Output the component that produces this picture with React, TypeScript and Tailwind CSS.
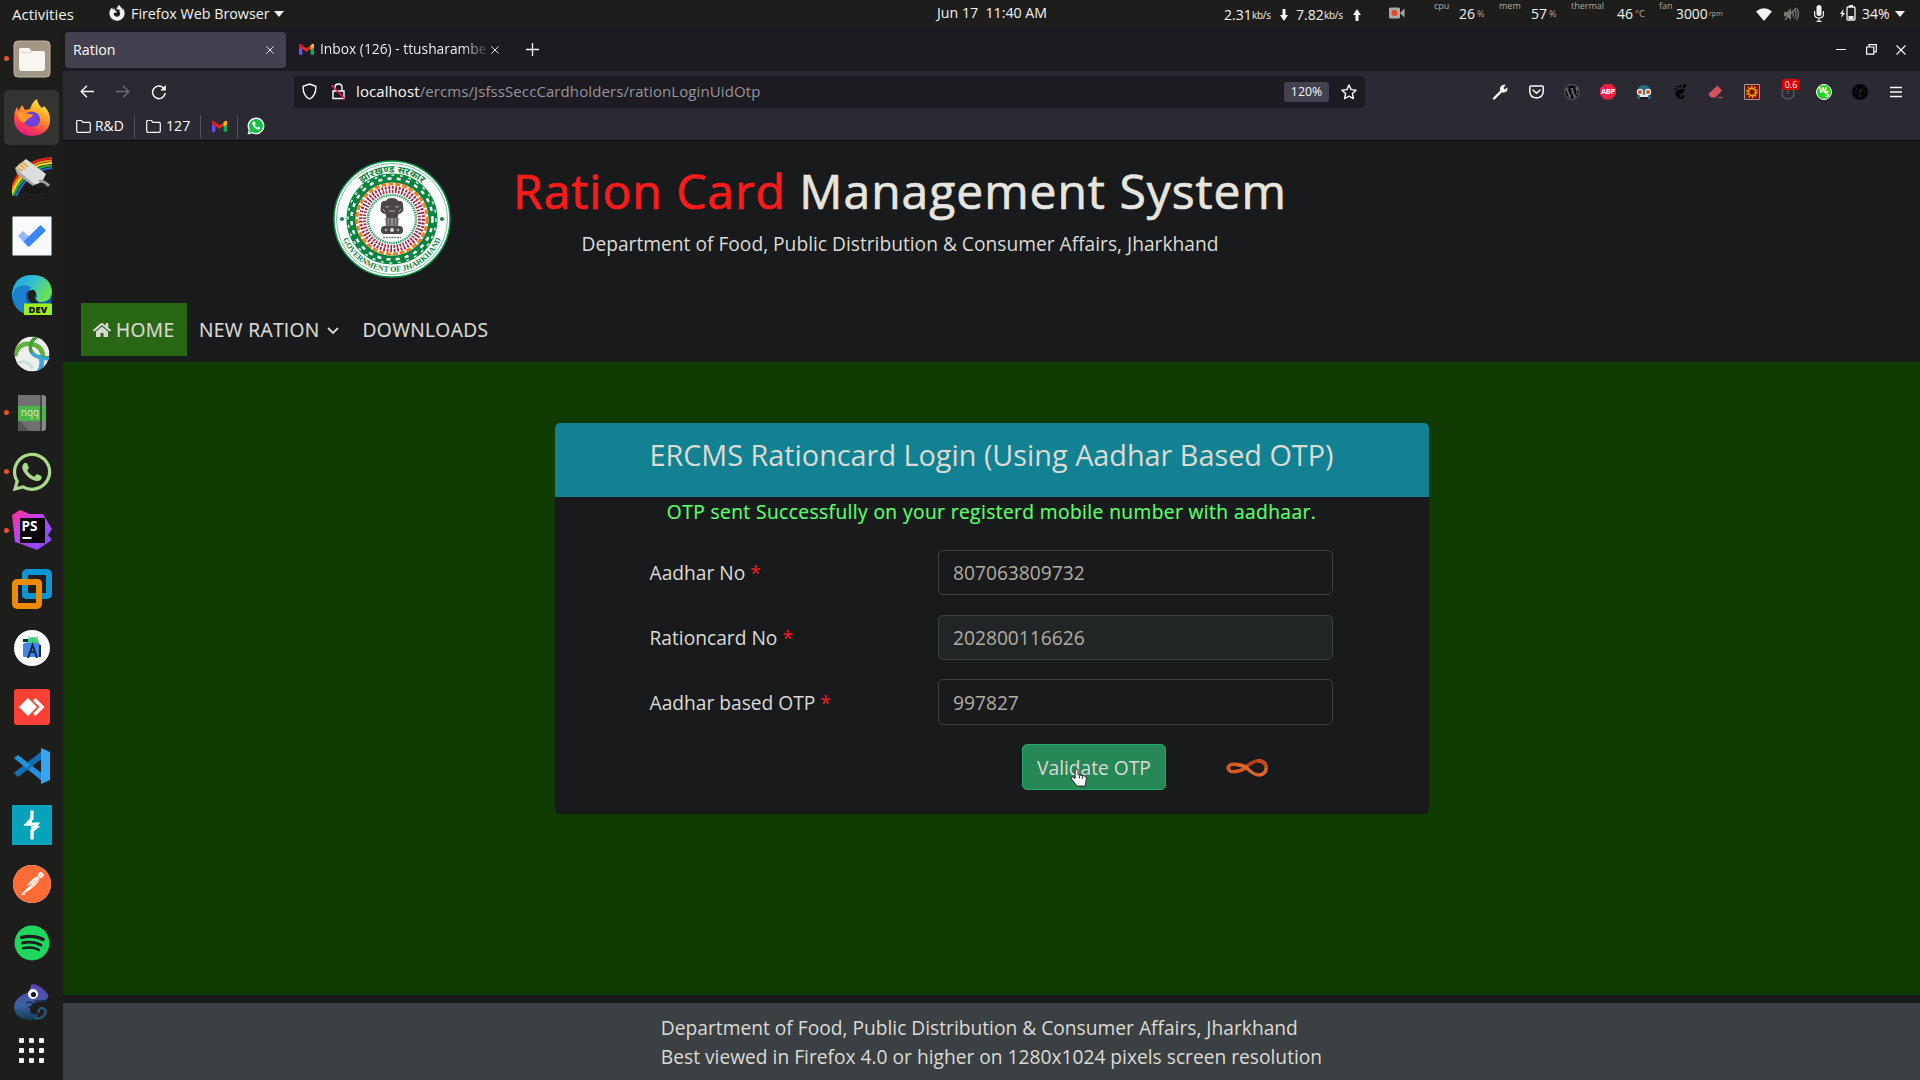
import React from "react";
import { FaWhatsapp, FaSpotify, FaWordpress, FaFirefoxBrowser, FaHome } from "react-icons/fa";
import { SiPostman, SiGnome } from "react-icons/si";

function Caret() {
  return (
    <svg width="10" height="6" viewBox="0 0 10 6">
      <path d="M0 0h10L5 6z" fill="#f2f2f0" />
    </svg>
  );
}

function Gmail({ size }: { size: number }) {
  return (
    <svg width={size} height={size} viewBox="0 0 16 16">
      <path d="M0 3v10.5h3.6V6z" fill="#6a4ff5" />
      <path d="M16 3v10.5h-3.6V6z" fill="#0fae55" />
      <path d="M0 3.4Q.2 1.8 1.8 2L8 7l6.2-5Q16 1.8 16 3.5v2.3l-3.6 2V6.9L8 10.6 3.6 7v1L0 5.6z" fill="#f0261c" />
      <path d="M12.4 3.5L14.2 2Q16 1.8 16 3.5v2.4l-3.6 2.4z" fill="#fbc107" />
      <path d="M0 3.4Q.2 1.8 1.8 2l1.800 1.500v4.700L0 5.800z" fill="#d11a3c" />
    </svg>
  );
}

function WhatsappBadge() {
  return (
    <svg width="18" height="18" viewBox="0 0 18 18">
      <path d="M.5 17.5l1.200-4.400A8.400 8.400 0 1 1 5 16.300z" fill="#fff" />
      <path d="M2 16l1-3.300A7 7 0 1 1 5.300 15z" fill="#12c143" />
      <path d="M6.200 4.600c-1.500 1-1 3.200.9 5.400 2 2.300 4.500 3.400 5.800 2 .8-.9.400-1.400-.3-1.800-1.200-.7-1.400-.6-2 .3-.8.200-2.600-1.500-2.700-2.400.9-.8.800-1 .4-2-.5-1.500-1.200-2.100-2.100-1.500z" fill="#fff" />
    </svg>
  );
}

function Folder() {
  return (
    <svg width="15" height="15" viewBox="0 0 15 15" fill="none" stroke="#fbfbfe" strokeWidth="1.2">
      <path d="M.7 12V2.600Q.7 1.500 1.800 1.500h3.700l1.500 1.800h6.200q1.100 0 1.100 1.100V12q0 1.300-1.200 1.300H1.900Q.7 13.300.7 12z" />
    </svg>
  );
}

function TopBar() {
  return (
    <div className="flex h-[28px] w-full shrink-0 items-center bg-[#1d1d1b] text-[14.3px] leading-[20px] text-[#f2f2f0]">
      <span className="ml-[12px] w-[97px] pb-[1px] text-[15px]">Activities</span>
      <span className="w-[22px] pb-[3px]"><FaFirefoxBrowser size={16} color="#f2f2f0" /></span>
      <span className="mr-[4px] w-[139px] pb-[1px]">Firefox Web Browser</span>
      <Caret />
      <span className="ml-[653px] w-[287px] pb-[2px] text-[14.2px] whitespace-pre">Jun 17  11:40 AM</span>
      <div className="flex h-[28px] items-center">
        <span className="w-[28px] pt-[1px] text-[14px]">2.31</span>
        <span className="w-[28px] pt-[1px] text-[10px] tracking-[-0.3px]">kb/s</span>
        <svg className="mt-[1px]" width="8" height="12" viewBox="0 0 8 12"><path d="M2.500 0h3v6H8l-4 6-4-6h2.500z" fill="#f2f2f0" /></svg>
        <span className="ml-[8px] w-[28px] pt-[1px] text-[14px]">7.82</span>
        <span className="w-[29px] pt-[1px] text-[10px] tracking-[-0.3px]">kb/s</span>
        <svg className="mt-[1px]" width="8" height="12" viewBox="0 0 8 12"><path d="M2.500 12h3V6H8L4 0 0 6h2.500z" fill="#f2f2f0" /></svg>
        <svg className="mb-[2px] ml-[28px]" width="16" height="12" viewBox="0 0 16 12">
          <rect width="11" height="11" y=".5" rx="1.5" fill="#a9a9a5" />
          <path d="M11 6l4.500-4.500v9z" fill="#a9a9a5" />
          <circle cx="5.500" cy="6" r="3" fill="#e8442b" />
        </svg>
        <span className="ml-[29px] h-[28px] w-[25px] text-[9px] leading-[12px] text-[#a9a9a5]">cpu</span>
        <span className="w-[18px] text-[14px]">26</span>
        <span className="w-[22px] text-[9px] text-[#a9a9a5]">%</span>
        <span className="h-[28px] w-[32px] text-[9px] leading-[12px] text-[#a9a9a5]">mem</span>
        <span className="w-[18px] text-[14px]">57</span>
        <span className="w-[22px] text-[9px] text-[#a9a9a5]">%</span>
        <span className="h-[28px] w-[46px] text-[9px] leading-[12px] text-[#a9a9a5]">thermal</span>
        <span className="w-[18px] text-[14px]">46</span>
        <span className="w-[24px] text-[9.5px] text-[#a9a9a5]">°C</span>
        <span className="h-[28px] w-[17px] text-[9px] leading-[12px] text-[#a9a9a5]">fan</span>
        <span className="w-[33px] text-[13.8px]">3000</span>
        <span className="w-[47px] text-[7px] text-[#a9a9a5]">rpm</span>
      </div>
      <svg width="16" height="13" viewBox="0 0 16 13"><path d="M0 3.500Q8-3.200 16 3.500L8 13z" fill="#f2f2f0" /></svg>
      <svg className="ml-[12px]" width="16" height="14" viewBox="0 0 16 14" fill="none" stroke="#777773" strokeWidth="1.300">
        <path d="M0 5h3l4-4v12L3 9.500H0z" fill="#777773" stroke="none" />
        <path d="M8.500 5q1.500 2 0 4.500M10.500 3q3 4 0 8.500M12.500 1.500q4 5.500 0 11.500" /><path d="M1 13L12 1" />
      </svg>
      <svg className="mb-[2px] ml-[14px]" width="10" height="17" viewBox="0 0 10 17"><rect x="2.500" width="5" height="11" rx="2.500" fill="#f2f2f0" /><path d="M.6 6v3q0 4 4.400 4t4.400-4V6M5 13v3M2.500 16.400h5" fill="none" stroke="#f2f2f0" strokeWidth="1.200" /></svg>
      <svg className="mb-[2px] ml-[16px]" width="16" height="16" viewBox="0 0 16 16"><path d="M3.500 4L0 9h2L1.200 13 5 8H3z" fill="#f2f2f0" /><rect x="7" y="2" width="8" height="13" rx="1" fill="none" stroke="#f2f2f0" strokeWidth="1.300" /><path d="M9 0h4v2H9zM8.500 11h5v3h-5z" fill="#f2f2f0" /></svg>
      <span className="ml-[6px] w-[33px] text-[14px]">34%</span>
      <Caret />
    </div>
  );
}

function Cross({ size, className }: { size: number; className?: string }) {
  return (
    <svg className={className} width={size} height={size} viewBox="0 0 10 10" stroke="#fbfbfe" strokeWidth="1.100">
      <path d="M.5.500l9 9M9.500.500l-9 9" />
    </svg>
  );
}

function TabStrip() {
  return (
    <div className="flex h-[43px] shrink-0 items-center bg-[#1c1b22] text-[14.2px] text-[#fbfbfe]">
      <div className="ml-[2px] flex h-[36px] w-[221px] items-center rounded-[4px] bg-[#42414d] pl-[8px]">
        <span className="w-[193px]">Ration</span>
        <Cross size={8} />
      </div>
      <div className="ml-[13px] flex items-center">
        <Gmail size={15} />
        <span className="ml-[6px] w-[167px] overflow-hidden bg-gradient-to-r from-[#fbfbfe] from-85% to-[#fbfbfe20] bg-clip-text text-[13.8px] whitespace-nowrap text-transparent">Inbox (126) - ttusharambe</span>
        <Cross size={8} className="ml-[4px]" />
      </div>
      <svg className="ml-[27px]" width="13" height="13" viewBox="0 0 13 13" stroke="#fbfbfe" strokeWidth="1.300"><path d="M6.500 0v13M0 6.500h13" /></svg>
      <svg className="ml-auto" width="10" height="10" viewBox="0 0 10 10" stroke="#fbfbfe"><path d="M0 4.500h10" /></svg>
      <svg className="ml-[20px]" width="11" height="11" viewBox="0 0 11 11" fill="none" stroke="#fbfbfe" strokeWidth="1.200"><path d="M.6 3h7.200v7.200H.6zM3 3V.6h7.300v7.300H8" /></svg>
      <Cross size={10} className="mr-[14px] ml-[19px]" />
    </div>
  );
}

const extensionIcons = [
  <svg key="wrench" width="16" height="16" viewBox="0 0 16 16"><path d="M2 14.500L10 6.500" stroke="#fbfbfe" strokeWidth="2.400" strokeLinecap="round" /><path d="M8 6Q7.500 1 12.500.5l1 .5-2 3L13 5.500l2.200-2.300q1.300 5.800-4.700 5.300z" fill="#fbfbfe" /></svg>,
  <svg key="pocket" width="15" height="14" viewBox="0 0 15 14" fill="none" stroke="#fbfbfe" strokeWidth="1.500"><path d="M.8 2Q.8 1 1.800 1h11.400q1 0 1 1v4q0 6.500-6.700 7Q.8 12.500.8 6zM4 5l3.500 3.300L11 5" strokeLinecap="round" /></svg>,
  <FaWordpress key="wp" size={16} color="#060607" className="rounded-full bg-[#66666a]" />,
  <div key="abp" className="flex h-4 w-4 items-center justify-center bg-[#ed1e45] text-[7.500px] font-bold tracking-[-0.3px] text-white [clip-path:polygon(30%_0,70%_0,100%_30%,100%_70%,70%_100%,30%_100%,0_70%,0_30%)]">ABP</div>,
  <svg key="goggles" width="16" height="16" viewBox="0 0 16 16"><path d="M1.500 9Q1 1 8 1t6.500 8v6H12v-3H4v3H1.500z" fill="#276c83" /><path d="M4 10.500h8v2.500H4z" fill="#e9e4dc" /><path d="M4 14.500h8" stroke="#111" strokeWidth="1.500" strokeDasharray="2 1" /><circle cx="4" cy="8" r="2.600" fill="#e54c23" stroke="#efebe2" strokeWidth="1.300" /><circle cx="12" cy="8" r="2.600" fill="#e54c23" stroke="#efebe2" strokeWidth="1.300" /></svg>,
  <SiGnome key="gnome" size={15} color="#050506" />,
  <svg key="eraser" width="16" height="14" viewBox="0 0 16 14"><path d="M9.500 1l4 4.500-6 6.500H3L.8 9z" fill="#d3525a" stroke="#d3525a" strokeLinejoin="round" /><path d="M10.500 12.500h4" stroke="#d3525a" strokeWidth="1.200" /></svg>,
  <svg key="sun" width="16" height="16" viewBox="0 0 16 16"><path d="M.5.500h15v15H.5z" fill="#861102" stroke="#999" /><circle cx="8" cy="8" r="5" fill="none" stroke="#e3a70b" strokeWidth="2" strokeDasharray="1.500 1.640" /><circle cx="8" cy="8" r="3.500" fill="none" stroke="#e3a70b" strokeWidth="1.500" /></svg>,
  <div key="speed" className="relative">
    <svg width="16" height="16" viewBox="0 0 16 16" fill="none" stroke="#55545c" strokeWidth="1.500"><circle cx="8" cy="9" r="6" /><path d="M8 4v6" /></svg>
    <span className="absolute -top-[5px] left-[2px] h-[11px] w-[18px] rounded-[2px] bg-[#d90000] text-center text-[9px] leading-[11px] text-white">0.6</span>
  </div>,
  <div key="ws" className="flex h-4 w-4 items-center justify-center rounded-full border border-white bg-[#20d126] text-[8px] leading-none font-bold text-white"><span className="-mt-[3px]">W</span><span className="mt-[5px] -ml-[2px]">S</span></div>,
  <svg key="gauge" width="16" height="16" viewBox="0 0 16 16"><circle cx="8" cy="8" r="8" fill="#060607" /><path d="M7.500 9.500L9.500 5M3 8h1M4.500 4.500l.7.700M12 8h1M6 12h4" stroke="#2f2f34" strokeWidth="1.200" /></svg>,
  <svg key="menu" width="12" height="12" viewBox="0 0 12 12" stroke="#fbfbfe" strokeWidth="1.500"><path d="M0 1.500h12M0 6h12M0 10.500h12" /></svg>,
];

function Toolbar() {
  return (
    <div className="h-[70px] shrink-0 border-b border-[#0b0b0d] bg-[#2b2a33] text-[#fbfbfe]">
      <div className="flex h-[41px] items-center pr-[6px]">
        <svg className="ml-[17px]" width="14" height="13" viewBox="0 0 14 13" fill="none" stroke="#fbfbfe" strokeWidth="1.400"><path d="M14 6.500H1M7 .7L1.200 6.500 7 12.300" /></svg>
        <svg className="ml-[22px]" width="14" height="13" viewBox="0 0 14 13" fill="none" stroke="#6e6d75" strokeWidth="1.400"><path d="M0 6.500h13M7 .7l5.800 5.800L7 12.300" /></svg>
        <svg className="ml-[21px]" width="16" height="16" viewBox="0 0 16 16" fill="none" stroke="#fbfbfe" strokeWidth="1.500"><path d="M14.200 9A6.300 6.300 0 1 1 12.500 4" /><path d="M14.800 1v5.500H9.300z" fill="#fbfbfe" stroke="none" /></svg>
        <div className="ml-[127px] flex h-[32px] w-[1071px] items-center rounded-[4px] bg-[#1c1b22]">
          <svg className="ml-[8px]" width="15" height="17" viewBox="0 0 15 17" fill="none" stroke="#fbfbfe" strokeWidth="1.400"><path d="M7.500 1l6.300 2.300q.6 9-6.300 12.700Q.6 12.300 1.200 3.300z" /></svg>
          <svg className="ml-[14px]" width="15" height="17" viewBox="0 0 15 17" fill="none" stroke="#fbfbfe" strokeWidth="1.400"><path d="M2 8h11v7.500H2zM4 8V4.500Q4 1 7.500 1T11 4.500V8" /><path d="M.5 2L14 16" stroke="#ed1d50" strokeWidth="1.600" /></svg>
          <span className="ml-[10px] text-[15px] tracking-[0.090px] text-[#96959c]"><span className="text-[#fbfbfe]">localhost</span>/ercms/JsfssSeccCardholders/rationLoginUidOtp</span>
          <span className="ml-auto h-[20px] w-[45px] rounded-[3px] bg-[#42414d] text-center text-[12.3px] leading-[20px]">120%</span>
          <svg className="mr-[8px] ml-[12px]" width="16" height="16" viewBox="0 0 16 16" fill="none" stroke="#fbfbfe" strokeWidth="1.400" strokeLinejoin="round"><path d="M8 1l2.100 4.600 5 .6-3.700 3.400 1 5L8 12.100l-4.400 2.500 1-5L.9 6.200l5-.6z" /></svg>
        </div>
        <div className="ml-auto flex items-center">
          {extensionIcons.map((icon, i) => (
            <span key={i} className="flex w-[36px] justify-center">{icon}</span>
          ))}
        </div>
      </div>
      <div className="flex h-[28px] items-center text-[14.2px]">
        <span className="ml-[13px]"><Folder /></span><span className="ml-[4px] w-[39px] text-[13.900px]">R&amp;D</span>
        <span className="h-[23px] w-px bg-[#54535c]" />
        <span className="ml-[11px]"><Folder /></span><span className="ml-[5px] w-[34px]">127</span>
        <span className="h-[23px] w-px bg-[#54535c]" />
        <span className="mr-[10px] ml-[11px]"><Gmail size={15} /></span>
        <span className="h-[23px] w-px bg-[#54535c]" />
        <span className="ml-[9px]"><WhatsappBadge /></span>
      </div>
    </div>
  );
}

const dock: { name: string; running?: boolean; active?: boolean; icon: React.ReactNode }[] = [
  { name: "files", running: true, icon: (
    <svg width="38" height="38" viewBox="0 0 38 38"><rect x="1" y="1" width="36" height="36" rx="4" fill="#a09884" stroke="#bdb7a4" /><path d="M6 10q0-2 2-2h8l2.500 3H30q2 0 2 2v15q0 3-3 3H9q-3 0-3-3z" fill="#f7f6f0" /><path d="M6.500 12.500h11l2-1.500" stroke="#d8d5ca" fill="none" /></svg>
  ) },
  { name: "firefox", running: true, active: true, icon: (
    <svg width="38" height="38" viewBox="0 0 38 38">
      <defs><linearGradient id="ff" x1=".8" y1="0" x2=".3" y2="1"><stop offset="0" stopColor="#fff24a" /><stop offset=".4" stopColor="#ffa022" /><stop offset=".75" stopColor="#ff3f50" /><stop offset="1" stopColor="#e31587" /></linearGradient><radialGradient id="ffc"><stop offset="0" stopColor="#7a3fea" /><stop offset="1" stopColor="#6a3fc9" /></radialGradient></defs>
      <path d="M4 8l1.500 4L9 6l3 5 5-1q2-7 7-10 1 6 5 9l2-2q7 7 6 16Q35 36 19 37 3 36 1 21 1 13 4 8z" fill="url(#ff)" />
      <path d="M12 15q7-5 13 0 4 6 0 11-6 4-12 0-4-5-1-11z" fill="url(#ffc)" />
      <path d="M4 13q8 0 11 2l5 .5q-1 3-5 4-1 3-6 4-5-5-5-10.500z" fill="#ff9a2a" />
    </svg>
  ) },
  { name: "asbru", icon: (
    <svg width="40" height="40" viewBox="0 0 40 40">
      <g fill="none" strokeWidth="2.200"><path d="M0 31Q8 3 40 1" stroke="#e52019" /><path d="M0 34Q10 5 40 3.500" stroke="#f58c18" /><path d="M0 37Q12 7 40 6" stroke="#f6e51c" /><path d="M1 39Q14 10 40 8.500" stroke="#29ac3c" /><path d="M4 39Q16 13 40 11" stroke="#2b69d0" /></g>
      <path d="M3 11L14 2l20 15-4 8-8 3z" fill="#ddd" /><path d="M3 11l2 6 16 12 1-2z" fill="#aaa" /><path d="M7 7l6 5M10 5l6 5M5 10l5 4" stroke="#e9a93c" strokeWidth="2" /><path d="M27 24q6 0 10 5" stroke="#999" strokeWidth="3" fill="none" />
      <text x="11" y="36" fontSize="9" fill="#0b0b0a" fontFamily="Open Sans">Asbru</text>
    </svg>
  ) },
  { name: "todo", icon: (
    <svg width="40" height="40" viewBox="0 0 40 40"><path d="M.5.500h39v39H.5z" fill="#f7f9fc" /><path d="M6 20l5-5 10 10-5 6z" fill="#94b8f6" /><path d="M11.500 25.500L28.500 9l5.500 5.500L17 31z" fill="#3a86f4" /></svg>
  ) },
  { name: "edge", icon: (
    <svg width="40" height="40" viewBox="0 0 40 40">
      <defs><linearGradient id="ed" x1="0" x2="1" y2=".5"><stop offset="0" stopColor="#1b9de2" /><stop offset=".5" stopColor="#31bfd2" /><stop offset="1" stopColor="#6be053" /></linearGradient></defs>
      <circle cx="20" cy="20" r="20" fill="#0f62b0" /><path d="M0 19Q2 0 20 0q18 0 20 16 0 10-10 11-8 0-5-6-1-6-8-6T3 24q-3 0-3-5z" fill="url(#ed)" /><path d="M3 14q9-7 17-1-8 2-6 12 2 10 10 14Q4 42 0 22z" fill="#1b7fd0" /><path d="M16 17q6-5 8 1 0 3-2 5l5 5h-8q-5-5-3-11z" fill="#1d1d1b" />
      <rect x="12" y="28.500" width="28" height="11.500" fill="#9df01c" /><text x="26" y="38" fontSize="9.500" fontWeight="800" textAnchor="middle" fontFamily="Open Sans" fill="#111">DEV</text>
    </svg>
  ) },
  { name: "anyconnect", icon: (
    <svg width="36" height="36" viewBox="0 0 36 36"><defs><clipPath id="an"><circle cx="18" cy="18" r="17.500" /></clipPath></defs><g clipPath="url(#an)" fill="none"><circle cx="18" cy="18" r="17.500" fill="#ecefee" /><path d="M3 28q8-6 16 4" stroke="#c4dfd3" strokeWidth="3" /><path d="M1 20Q4 6 17 8t12 16" stroke="#64b040" strokeWidth="4.500" /><path d="M24 0q-10 6-7 15 3 7 19 7" stroke="#43993e" strokeWidth="3.500" /><path d="M26 20q4 8-1 16" stroke="#35a7dc" strokeWidth="4.500" /><path d="M18 17q6 6 18 6" stroke="#35a7dc" strokeWidth="3.500" /></g></svg>
  ) },
  { name: "notepad", running: true, icon: (
    <svg width="30" height="38" viewBox="0 0 30 38"><path d="M1 1h22v36H1z" fill="#707070" /><path d="M23 1h3q3 0 3 3v30q0 3-3 3h-3z" fill="#888" /><path d="M1 25l11 12H1z" fill="#555" /><path d="M1 12h28v15H1z" fill="#4eb649" /><path d="M24 1v36" stroke="#333" strokeWidth="1.500" /><text x="13" y="22" fontSize="10" textAnchor="middle" fontFamily="Open Sans" fill="#d7ecd3">nqq</text></svg>
  ) },
  { name: "whatsapp", running: true, icon: <FaWhatsapp size={44} color="#acd98c" /> },
  { name: "phpstorm", running: true, icon: (
    <svg width="40" height="40" viewBox="0 0 40 40"><defs><linearGradient id="ps" x2="1" y2="1"><stop offset="0" stopColor="#ff3190" /><stop offset=".4" stopColor="#c040f0" /><stop offset="1" stopColor="#7350ff" /></linearGradient></defs><path d="M0 5l8-5 10 4 13 0 9 15-4 6 4 5-15 10-13-5-9-3z" fill="url(#ps)" /><rect x="8" y="8" width="25" height="25" fill="#070707" /><text x="9.500" y="21" fontSize="13.500" fontWeight="700" fontFamily="Open Sans" fill="#fff">PS</text><path d="M10.500 28h9" stroke="#fff" strokeWidth="2" /></svg>
  ) },
  { name: "vmware", icon: (
    <svg width="40" height="40" viewBox="0 0 40 40" fill="none" strokeWidth="6"><rect x="13" y="3" width="24" height="24" rx="2" stroke="#0c95d3" /><rect x="3" y="13" width="24" height="24" rx="2" stroke="#ee8c00" /><path d="M13 10v15q0 2 2 2h6" stroke="#0c95d3" /><path d="M10 13h15q2 0 2 2v4" stroke="#ee8c00" /></svg>
  ) },
  { name: "android studio", icon: (
    <svg width="36" height="36" viewBox="0 0 36 36"><circle cx="18" cy="18" r="18" fill="#fff" /><path d="M12 14q1-7 7-7t6 7z" fill="#3fcf7f" /><path d="M14 6l2 3M24 6l-2 3" stroke="#3fcf7f" /><rect x="9" y="13" width="17" height="14" rx="1.500" fill="#4385ea" /><path d="M9 9h5v3H9z" fill="#102d3d" /><path d="M14 28l4.500-13L23 28M16 22h5M26 15v12" stroke="#102d3d" strokeWidth="2" fill="none" /></svg>
  ) },
  { name: "anydesk", icon: (
    <svg width="36" height="36" viewBox="0 0 36 36"><rect width="36" height="36" rx="3" fill="#fb4036" /><path d="M5 18l9-9 9 9-9 9z" fill="#fff" /><path d="M19 11.500L21.500 9l9 9-9 9-2.500-2.500 6.500-6.500z" fill="#fff" /></svg>
  ) },
  { name: "vscode", icon: (
    <svg width="36" height="36" viewBox="0 0 36 36"><path d="M1 10l3-2 25 19v6z" fill="#2390dc" stroke="#2390dc" strokeWidth="1.500" /><path d="M1 25l3 3L29 9V3z" fill="#126fb5" stroke="#126fb5" strokeWidth="1.500" /><path d="M1 10l3-2 12 9-4 3z" fill="#2390dc" /><path d="M27 0l9 4v28l-9 4z" fill="#33a6ef" /></svg>
  ) },
  { name: "burp", icon: (
    <svg width="40" height="40" viewBox="0 0 40 40"><path d="M0 0h40v40H0z" fill="#05a2b9" /><path d="M20 5.500v8L15 19h10l-5 6.500v9" fill="none" stroke="#fff" strokeWidth="3.200" /><path d="M18.500 9v5.500L11.500 20.500h9zM21.500 31.500v-5l7-5.500H19z" fill="#fff" /></svg>
  ) },
  { name: "postman", icon: <span className="rounded-full bg-white"><SiPostman size={38} color="#ff6b37" /></span> },
  { name: "spotify", icon: <FaSpotify size={36} color="#1ed75f" /> },
  { name: "chameleon", icon: (
    <svg width="36" height="36" viewBox="0 0 36 36"><defs><linearGradient id="ch" y2="1" x2="0"><stop offset="0" stopColor="#5d45ae" /><stop offset=".6" stopColor="#3a60a4" /><stop offset="1" stopColor="#123a4d" /></linearGradient></defs><path d="M16 8q0-6 2-8 7 0 14 8 4 3 1 7-4 3-9 3-8 1-8 7 0 5 4 5h4q-1 5-7 6Q1 36 0 23 1 12 16 8z" fill="url(#ch)" /><path d="M25 29q-1-5 3-5 5 1 3 6-4 6-11 4" fill="none" stroke="#28557d" strokeWidth="2.500" /><path d="M12 19q5-2 8 1l-6 4M20 17h13" stroke="#16304d" strokeWidth="1.500" fill="none" /><circle cx="19" cy="10" r="5" fill="#fff" /><circle cx="19.500" cy="10.500" r="2.600" fill="#161630" /></svg>
  ) },
];

function Dock() {
  return (
    <aside className="flex w-[63px] shrink-0 flex-col bg-[#1d1d1b] pt-[1.500px]">
      {dock.map((d) => (
        <div key={d.name} className="flex h-[58.940px] shrink-0 items-center">
          <span className="flex w-[9px] justify-end"><span className={d.running ? "h-[5px] w-[5px] rounded-full bg-[#e95420]" : "h-[5px] w-[5px]"} /></span>
          <span className={d.active ? "-ml-[5px] flex h-[55px] w-[55px] items-center justify-center rounded-[5px] bg-[#333331]" : "-ml-[5px] flex h-[55px] w-[55px] items-center justify-center"}>{d.icon}</span>
        </div>
      ))}
      <div className="mt-[7px] ml-[19px] grid w-[25px] grid-cols-3 gap-[5px]">
        {Array.from({ length: 9 }, (_, i) => <span key={i} className="h-[5px] w-[5px] rounded-[1px] bg-[#f2f2ee]" />)}
      </div>
    </aside>
  );
}

function Seal() {
  return (
    <svg width="118" height="118" viewBox="-59 -59 118 118">
      <defs>
        <path id="sealTop" d="M-46.500 0A46.500 46.500 0 0 1 46.500 0" />
        <path id="sealBottom" d="M-53 0A53 53 0 0 0 53 0" />
      </defs>
      <circle r="58" fill="#fff" stroke="#11904a" strokeWidth="1.500" />
      <circle r="55.500" fill="none" stroke="#3aa56b" strokeWidth=".7" />
      <circle r="41" fill="none" stroke="#0a8440" strokeWidth="9" />
      <circle r="40.500" fill="none" stroke="#fff" strokeWidth="2.500" strokeDasharray="4 5.300" />
      <circle r="44" fill="none" stroke="#d9efe0" strokeWidth="1.500" strokeDasharray="3 5.600" />
      <circle r="35" fill="none" stroke="#f27e22" strokeWidth="3" strokeDasharray="5 2" />
      <circle r="29.500" fill="none" stroke="#9c2f4b" strokeWidth="7" strokeDasharray="1.800 1.500" />
      <circle r="29.500" fill="none" stroke="#fff" strokeWidth="1" strokeDasharray="4 2" />
      <circle r="24" fill="none" stroke="#3aa56b" strokeWidth="2.500" strokeDasharray="1.500 .8" />
      <circle r="21.500" fill="#fff" />
      <g fill="#4c4648">
        <path d="M-11-15q1-4 5-3 1-3 6-3t6 3q4-1 5 3l.5 6q-2 4-5 4l-1 4h-11l-1-4q-5-1-5-4z" />
        <path d="M-7-1H7l-1 8H-6z" fill="#9a9698" />
        <path d="M-5-1v8M-2-1v8M2-1v8M5-1v8" stroke="#4c4648" strokeWidth="1.200" />
        <rect x="-11" y="7" width="22" height="8" rx="3.500" />
      </g>
      <path d="M-7-13q2 3 4 0M3-13q2 3 4 0M-3-8h6M-9-10l2 3M9-10l-2 3" stroke="#aaa" fill="none" />
      <circle cy="11" r="2" fill="#ddd" /><circle cx="-6" cy="11" r="1.300" fill="#aaa" /><circle cx="6" cy="11" r="1.300" fill="#aaa" />
      <path d="M-9 18.500H9" stroke="#777" strokeWidth="1.500" strokeDasharray="2 .8" />
      <circle cx="-50" r="2" fill="#0a8440" /><circle cx="50" r="2" fill="#0a8440" />
      <text fontSize="10" fontWeight="700" fill="#128646" textAnchor="middle" fontFamily="Noto Sans, sans-serif"><textPath href="#sealTop" startOffset="50%">झारखण्ड सरकार</textPath></text>
      <text fontSize="8" fontWeight="700" fill="#128646" textAnchor="middle" fontFamily="Liberation Serif" ><textPath href="#sealBottom" startOffset="50%">GOVERNMENT OF JHARKHAND</textPath></text>
    </svg>
  );
}

function Header() {
  return (
    <header className="h-[221px] shrink-0">
      <div className="flex h-[162px]">
        <div className="mt-[19px] ml-[270px] h-[118px] w-[118px]"><Seal /></div>
        <div className="ml-[49px] w-[800px] pt-[20.600px] text-center">
          <h1 className="text-[48px] leading-[57.600px] tracking-[0.970px] whitespace-nowrap text-[#e6e5df] [-webkit-text-stroke:0.700px_currentColor]"><span className="text-[#ff1a1a]">Ration Card</span> Management System</h1>
          <p className="mt-[10.600px] text-[19.200px] leading-[28.800px]">Department of Food, Public Distribution &amp; Consumer Affairs, Jharkhand</p>
        </div>
      </div>
      <nav className="ml-[18px] flex text-[19.200px] leading-[53px] tracking-[0.350px] [-webkit-text-stroke:0.200px_currentColor]">
        <a className="flex h-[53px] w-[106px] items-center bg-[#2a6715] pl-[12px]"><FaHome size={18} strokeWidth={0} className="mr-[5px]" />HOME</a>
        <a className="flex h-[53px] items-center px-[12px]">NEW RATION
          <svg className="mt-[2px] ml-[7px]" width="12" height="8" viewBox="0 0 12 8" fill="none" stroke="#dcdad5" strokeWidth="1.800"><path d="M1 1l5 5 5-5" /></svg>
        </a>
        <a className="h-[53px] px-[12px]">DOWNLOADS</a>
      </nav>
    </header>
  );
}

function Field({ label, value, disabled }: { label: string; value: string; disabled?: boolean }) {
  return (
    <div className="mb-[19.200px] flex h-[45.600px] items-center">
      <label className="w-[288px] pt-[1.500px]">{label} <span className="text-[#ff1a1a]">*</span></label>
      <div className={disabled ? "flex h-[45.600px] w-[395px] items-center rounded-[5px] border border-[#3d4143] bg-[#222526] pt-[1.500px] pl-[14.500px] text-[#b0aca2]" : "flex h-[45.600px] w-[395px] items-center rounded-[5px] border border-[#3d4143] bg-[#181a1b] pt-[1.500px] pl-[14.500px] text-[#b0aca2]"}>{value}</div>
    </div>
  );
}

function InfinityLoader() {
  return (
    <svg className="mt-[2px] ml-[60px]" width="42" height="18" viewBox="0 0 42 18" fill="none" strokeLinecap="round">
      <path d="M19 9Q27 1.500 33 1.800" stroke="#b5400f" strokeWidth="3.400" />
      <path d="M20 8Q12 4.500 5 5.500-1 9 5 12.500q8 1 15-4" stroke="#d95a1d" strokeWidth="3.400" />
      <path d="M33 1.800q7.500 1 7.200 7.200-.5 6.500-7.200 7-6 0-13-8-3-1.500-7-2" stroke="#e0672a" strokeWidth="3.400" />
      <path d="M33 1.800q6 1 7 6" stroke="#c14a14" strokeWidth="3.200" />
    </svg>
  );
}

function LoginCard() {
  return (
    <section className="h-[391px] w-[874px] overflow-hidden rounded-[5px] bg-[#181a1b]">
      <h4 className="h-[74px] bg-[#128292] pt-[15.400px] text-center text-[28.800px] leading-[34.560px]">ERCMS Rationcard Login (Using Aadhar Based OTP)</h4>
      <p className="mb-[23px] pt-[1px] text-center tracking-[0.400px] text-[#5aff6c] [-webkit-text-stroke:0.200px_currentColor]">OTP sent Successfully on your registerd mobile number with aadhaar.</p>
      <div className="pl-[95px]">
        <Field label="Aadhar No" value="807063809732" />
        <Field label="Rationcard No" value="202800116626" disabled />
        <Field label="Aadhar based OTP" value="997827" />
        <div className="flex items-center pl-[372px]">
          <button className="relative h-[46px] w-[144px] rounded-[5px] border border-[#24a866] bg-[#268757] pt-[2px] pl-[1px]">
            Validate OTP
            <svg className="absolute top-[23px] left-[46px]" width="19" height="19" viewBox="0 0 19 20"><path d="M6 2q2-2 3 0v5l7 1.500q2 .5 1.800 3L17 16v3H8L2 11.500Q1 9 3.500 9.500L6 11z" fill="#fff" stroke="#222" /><path d="M10.500 8v3M13.500 8.500v3" stroke="#222" /></svg>
          </button>
          <InfinityLoader />
        </div>
      </div>
    </section>
  );
}

export default function App() {
  return (
    <div className="flex h-[1080px] w-[1920px] flex-col overflow-hidden bg-[#181a1b] font-['Open_Sans',sans-serif]">
      <TopBar />
      <div className="flex min-h-0 flex-1">
        <Dock />
        <div className="flex min-w-0 flex-1 flex-col">
          <TabStrip />
          <Toolbar />
          <main className="flex flex-1 flex-col bg-[#181a1b] text-[19.200px] leading-[28.800px] text-[#dcdad5]">
            <Header />
            <div className="mb-[8px] flex flex-1 justify-center bg-[#0f3a00] pt-[61px]"><LoginCard /></div>
            <footer className="flex h-[77px] shrink-0 justify-center bg-[#3b4042] pt-[11px]">
              <p>Department of Food, Public Distribution &amp; Consumer Affairs, Jharkhand<br />Best viewed in Firefox 4.0 or higher on 1280x1024 pixels screen resolution</p>
            </footer>
          </main>
        </div>
      </div>
    </div>
  );
}
